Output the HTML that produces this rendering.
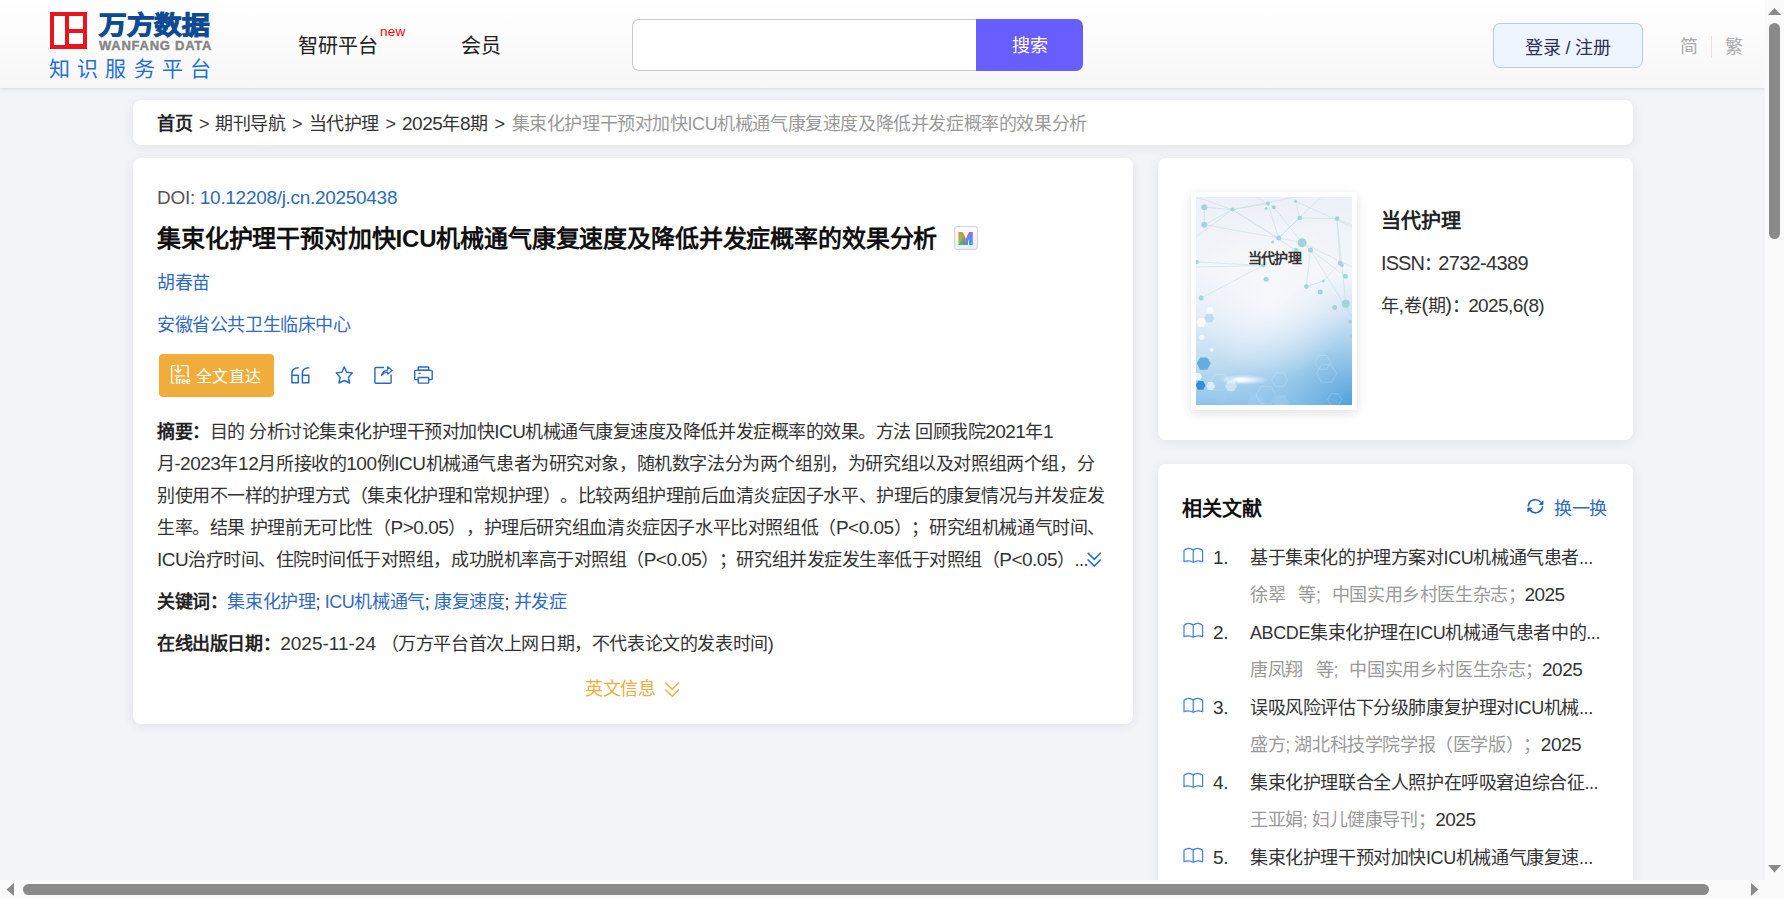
<!DOCTYPE html>
<html lang="zh-CN"><head><meta charset="utf-8">
<style>
*{margin:0;padding:0;box-sizing:border-box}
html,body{width:1784px;height:899px;overflow:hidden}
body{text-spacing-trim:space-all;font-family:"Liberation Sans",sans-serif;background:#f2f4f8;position:relative;color:#333}
.abs{position:absolute;white-space:nowrap}
.bc{top:111.5px;font-size:18px;letter-spacing:-0.4px;line-height:24px;color:#333}
.lt{font-size:20px}
.la{font-size:19px;letter-spacing:-0.5px}
.jl{font-size:18px;letter-spacing:-0.5px;line-height:32px;color:#333;text-align:justify;text-align-last:justify;white-space:nowrap}
#hdr{position:absolute;left:0;top:0;width:1765px;height:88px;background:linear-gradient(#ffffff,#f7f7f8);box-shadow:0 1px 4px rgba(0,0,0,0.12)}
.card{position:absolute;background:#fff;border-radius:8px;box-shadow:0 2px 12px rgba(20,30,60,0.08)}
.vsb{position:absolute;left:1765px;top:0;width:19px;height:899px;background:#fafafa}
.hsb{position:absolute;left:0;top:880px;width:1765px;height:19px;background:#fafafa}
</style></head><body>
<div id="hdr"></div>
<!-- logo -->
<div class="abs" style="left:50px;top:12px;width:37px;height:37px;background:#e8141e"></div>
<div class="abs" style="left:54px;top:16px;width:11px;height:29px;background:#fff"></div>
<div class="abs" style="left:69px;top:16px;width:14px;height:13px;background:#fff"></div>
<div class="abs" style="left:69px;top:33px;width:14px;height:11px;background:#fff"></div>
<div class="abs" style="left:99px;top:10.5px;font-size:28px;font-weight:bold;color:#0e4b93;letter-spacing:0px;line-height:34px;-webkit-text-stroke:1.2px #0e4b93;transform:scale(0.985,0.9);transform-origin:0 0">万方数据</div>
<div class="abs" style="left:99px;top:38.5px;font-size:13px;font-weight:bold;color:#858585;letter-spacing:0.75px;line-height:14px;-webkit-text-stroke:0.4px #858585">WANFANG DATA</div>
<div class="abs" style="left:49px;top:56px;font-size:21px;color:#1f6fd9;letter-spacing:7.2px;line-height:26px">知识服务平台</div>
<!-- nav -->
<div class="abs" style="left:298px;top:33px;font-size:20px;color:#222;line-height:26px">智研平台</div>
<div class="abs" style="left:380px;top:24px;font-size:13.5px;letter-spacing:0.3px;color:#f00;line-height:16px">new</div>
<div class="abs" style="left:461px;top:33px;font-size:20px;color:#222;line-height:26px">会员</div>
<!-- search -->
<div class="abs" style="left:632px;top:19px;width:351px;height:52px;border:1px solid #c9c9c9;border-radius:7px 0 0 7px;background:#fff;border-right:none"></div>
<div class="abs" style="left:976px;top:19px;width:107px;height:52px;border-radius:0 7px 7px 0;background:#685dfd;color:#fff;font-size:18px;letter-spacing:0px;line-height:55px;text-align:center">搜索</div>
<!-- login -->
<div class="abs" style="left:1493px;top:23px;width:150px;height:45px;border:1px solid #b5cbef;border-radius:7px;background:#eef5fe;color:#2b2e55;font-size:18px;letter-spacing:-0.2px;line-height:48px;text-align:center">登录 / 注册</div>
<div class="abs" style="left:1680px;top:35px;font-size:18px;letter-spacing:-0.4px;color:#aaa;line-height:24px">简</div>
<div class="abs" style="left:1711px;top:36px;width:1px;height:22px;background:#e3e3e3"></div>
<div class="abs" style="left:1725px;top:35px;font-size:18px;letter-spacing:-0.4px;color:#aaa;line-height:24px">繁</div>

<!-- breadcrumb -->
<div class="card" style="left:133px;top:100px;width:1500px;height:45px"></div>
<div class="abs bc" style="left:157px"><b style="color:#222">首页</b></div>
<div class="abs bc" style="left:199px">&gt;</div>
<div class="abs bc" style="left:215px">期刊导航</div>
<div class="abs bc" style="left:292px">&gt;</div>
<div class="abs bc" style="left:308.5px">当代护理</div>
<div class="abs bc" style="left:385.5px">&gt;</div>
<div class="abs bc" style="left:402px"><span class="la">2025</span>年<span class="la">8</span>期</div>
<div class="abs bc" style="left:494.5px">&gt;</div>
<div class="abs bc" style="left:511.5px"><span style="color:#999">集束化护理干预对加快ICU机械通气康复速度及降低并发症概率的效果分析</span></div>
<!-- main card -->
<div class="card" style="left:133px;top:158px;width:1000px;height:566px"></div>
<div class="abs" style="left:157px;top:186px;font-size:19px;letter-spacing:-0.3px;line-height:24px;color:#555">DOI: <span style="color:#2b6cb8">10.12208/j.cn.20250438</span></div>
<div class="abs" style="left:157px;top:224px;font-size:24px;letter-spacing:-0.15px;line-height:30px;color:#111;font-weight:bold">集束化护理干预对加快ICU机械通气康复速度及降低并发症概率的效果分析</div>
<div class="abs" style="left:954px;top:226px;width:24px;height:24px;border:1px solid #d2d2d2;border-radius:3px;background:linear-gradient(#fbfcfe,#e9eff8)"></div>
<svg class="abs" style="left:958px;top:231px" width="16" height="15"><defs>
<linearGradient id="mg" x1="0" y1="0" x2="1" y2="1"><stop offset="0" stop-color="#ff7a12"/><stop offset="0.45" stop-color="#8cc83a"/><stop offset="0.6" stop-color="#56a3a0"/><stop offset="1" stop-color="#3fa0ee"/></linearGradient>
<linearGradient id="mg2" x1="0" y1="0" x2="0" y2="1"><stop offset="0" stop-color="#b45ee0"/><stop offset="0.5" stop-color="#5d8ef0"/><stop offset="1" stop-color="#3ea2ee"/></linearGradient></defs>
<path d="M0.5 1 H4.5 L7.5 7 L7.5 14 H4.5 L4.5 7 V14 H0.5 Z" fill="url(#mg)"/>
<path d="M4.5 1 L8 8.5 V14 H4.8 Z" fill="#e0745a" opacity="0.9"/>
<path d="M7.5 14 V8.5 L11 1 H14.8 V14 H11 V8 L9 14 Z" fill="url(#mg2)"/>
<path d="M5 14 V8 L7.5 13 L10 8 V14 Z" fill="#4e9c8e"/>
</svg>
<div class="abs" style="left:157px;top:271px;font-size:18px;letter-spacing:-0.4px;line-height:24px;color:#2f6bc2">胡春苗</div>
<div class="abs" style="left:157px;top:312.5px;font-size:18px;letter-spacing:-0.4px;line-height:24px;color:#2f6bc2">安徽省公共卫生临床中心</div>
<div class="abs" style="left:159px;top:354px;width:115px;height:43px;border-radius:4px;background:#f0ad3b"></div>
<div class="abs" style="left:196px;top:365.5px;font-size:16px;letter-spacing:0.3px;line-height:22px;color:#fff">全文直达</div>
<svg class="abs" style="left:160px;top:355px" width="40" height="40" fill="none" stroke="#fff" stroke-width="1.4" stroke-linecap="round" stroke-linejoin="round">
<path d="M15 10.6 H12.5 Q11.6 10.6 11.6 11.5 V27.2 Q11.6 28.1 12.5 28.1 H14"/>
<path d="M21.2 10.6 H27.2 Q28.1 10.6 28.1 11.5 V21.8"/>
<path d="M18 10.3 V17.3"/><path d="M15 14.8 L18 17.6 L21 14.8"/><path d="M15.2 20.9 H24.4"/>
<text x="15.6" y="28.9" fill="#fff" stroke="none" font-family="Liberation Sans" font-weight="bold" font-size="8.2">free</text>
</svg>
<svg class="abs" style="left:285px;top:360px" width="150" height="30" fill="none" stroke="#2868c4" stroke-width="1.5" stroke-linejoin="round">
<path d="M13.8 7.8 C9 7.8 6.9 9.6 6.9 13.6 V22.8 H13.3 V15.3 H6.9"/>
<path d="M24.3 7.8 C19.5 7.8 17.4 9.6 17.4 13.6 V22.8 H23.8 V15.3 H17.4"/>
<path d="M59.3 6.9 L61.7 12.2 L67.3 12.9 L63.4 17.5 L64.7 23 L59.3 20.5 L53.9 23 L55.2 17.5 L51.3 12.9 L56.9 12.2 Z" stroke-width="1.4"/>
</svg>
<svg class="abs" style="left:365px;top:360px" width="80" height="30" fill="none" stroke="#2868c4" stroke-width="1.4" stroke-linejoin="round">
<path d="M19 7.5 H10.8 Q9.9 7.5 9.9 8.4 V22.3 Q9.9 23.2 10.8 23.2 H25.2 Q26.1 23.2 26.1 22.3 V14.6"/>
<path d="M16.4 15.6 Q17.6 10.6 22.7 10.2 V6.7 L27.2 10.4 L22.7 14.2 V12.2 Q19 12.2 16.4 15.6 Z" stroke-width="1.2"/>
<rect x="53.2" y="7" width="10.5" height="3.3" rx="0.6"/>
<path d="M53.2 19.6 H50.5 Q49.7 19.6 49.7 18.8 V11.2 Q49.7 10.4 50.5 10.4 H66.4 Q67.2 10.4 67.2 11.2 V18.8 Q67.2 19.6 66.4 19.6 H63.7"/>
<rect x="53.2" y="17.5" width="10.5" height="5.6" rx="0.6"/>
<path d="M53.4 13.3 H55.8" stroke-width="1.3"/>
</svg>
<!-- abstract -->
<div class="abs jl" style="left:157px;top:415.5px;width:896px"><b style="color:#222">摘要：</b>目的 分析讨论集束化护理干预对加快<span class="la">ICU</span>机械通气康复速度及降低并发症概率的效果。方法 回顾我院<span class="la">2021</span>年<span class="la">1</span></div>
<div class="abs jl" style="left:157px;top:447.5px;width:937px">月-<span class="la">2023</span>年<span class="la">12</span>月所接收的<span class="la">100</span>例<span class="la">ICU</span>机械通气患者为研究对象，随机数字法分为两个组别，为研究组以及对照组两个组，分</div>
<div class="abs jl" style="left:157px;top:479.5px;width:947px">别使用不一样的护理方式（集束化护理和常规护理）。比较两组护理前后血清炎症因子水平、护理后的康复情况与并发症发</div>
<div class="abs jl" style="left:157px;top:511.5px;width:948px">生率。结果 护理前无可比性（<span class="la">P&gt;0.05</span>），护理后研究组血清炎症因子水平比对照组低（<span class="la">P&lt;0.05</span>）；研究组机械通气时间、</div>
<div class="abs jl" style="left:157px;top:543.5px;width:931px"><span class="la">ICU</span>治疗时间、住院时间低于对照组，成功脱机率高于对照组（<span class="la">P&lt;0.05</span>）；研究组并发症发生率低于对照组（<span class="la">P&lt;0.05</span>）...</div>
<div class="abs" style="left:157px;top:590px;font-size:18px;letter-spacing:-0.4px;line-height:24px;color:#333"><b style="color:#222">关键词：</b><span style="color:#2f6bc2">集束化护理</span>; <span style="color:#2f6bc2">ICU机械通气</span>; <span style="color:#2f6bc2">康复速度</span>; <span style="color:#2f6bc2">并发症</span></div>
<div class="abs" style="left:157px;top:632px;font-size:18px;letter-spacing:-0.4px;line-height:24px;color:#333"><b style="color:#222">在线出版日期：</b><span style="font-size:19px;letter-spacing:0px">2025-11-24</span> （万方平台首次上网日期，不代表论文的发表时间)</div>
<div class="abs" style="left:585px;top:676.5px;font-size:18px;letter-spacing:-0.4px;line-height:24px;color:#f0ad3b">英文信息</div>
<svg class="abs" style="left:575px;top:670px" width="120" height="35" fill="none" stroke="#f0ad3b" stroke-width="1.4"><path d="M90.4 12.4 L97.2 19.3 L103.9 12.4 M90.4 19.4 L97.2 26.2 L103.9 19.4"/></svg>
<svg class="abs" style="left:1065px;top:545px" width="45" height="30" fill="none" stroke="#2868c8" stroke-width="1.6"><path d="M22.7 7.7 L29.3 14.3 L35.8 7.7 M22.7 14.5 L29.3 21.1 L35.8 14.5"/></svg>
<!-- journal card -->
<div class="card" style="left:1158px;top:158px;width:475px;height:282px"></div>
<div class="abs" style="left:1191px;top:192px;width:166px;height:218px;background:#fff;box-shadow:0 3px 10px rgba(0,0,0,0.12)"></div>
<svg class="abs" style="left:1196px;top:197px" width="156" height="208" viewBox="0 0 156 208">
<defs>
<linearGradient id="cg" x1="0" y1="0" x2="0" y2="1"><stop offset="0" stop-color="#edf1f7"/><stop offset="0.35" stop-color="#f3f5f9"/><stop offset="0.55" stop-color="#e6eef8"/><stop offset="0.8" stop-color="#c0dcf1"/><stop offset="1" stop-color="#8fc4ea"/></linearGradient>
<radialGradient id="cr" cx="156" cy="208" r="130" gradientUnits="userSpaceOnUse"><stop offset="0" stop-color="#4a9dda" stop-opacity="0.9"/><stop offset="0.5" stop-color="#79b8e6" stop-opacity="0.4"/><stop offset="1" stop-color="#9ccbef" stop-opacity="0"/></radialGradient>
<radialGradient id="cw" cx="75" cy="100" r="80" gradientUnits="userSpaceOnUse"><stop offset="0" stop-color="#f8f9fc" stop-opacity="0.85"/><stop offset="1" stop-color="#fafbfd" stop-opacity="0"/></radialGradient>
<radialGradient id="fl" cx="0.5" cy="0.5" r="0.5"><stop offset="0" stop-color="#ffffff" stop-opacity="1"/><stop offset="1" stop-color="#ffffff" stop-opacity="0"/></radialGradient>
</defs>
<rect width="156" height="208" fill="url(#cg)"/>
<rect width="156" height="208" fill="url(#cr)"/>
<rect width="156" height="208" fill="url(#cw)"/>
<g stroke="#b3dae1" stroke-width="0.6" opacity="0.75">
<line x1="8.2" y1="10.2" x2="36.4" y2="12.6"/><line x1="8.2" y1="10.2" x2="8.2" y2="27.7"/><line x1="36.4" y1="12.6" x2="8.2" y2="27.7"/><line x1="36.4" y1="12.6" x2="82.7" y2="40.9"/><line x1="36.4" y1="12.6" x2="71.9" y2="6.6"/><line x1="71.9" y1="6.6" x2="82.7" y2="40.9"/><line x1="77.9" y1="10.2" x2="106.1" y2="45.7"/><line x1="99.5" y1="4.2" x2="103.7" y2="21"/><line x1="103.7" y1="21" x2="82.7" y2="40.9"/><line x1="103.7" y1="21" x2="141" y2="21.6"/><line x1="82.7" y1="40.9" x2="106.1" y2="45.7"/><line x1="106.1" y1="45.7" x2="114.5" y2="52.9"/><line x1="114.5" y1="52.9" x2="110.3" y2="89.6"/><line x1="110.3" y1="89.6" x2="127.2" y2="84.1"/><line x1="127.2" y1="84.1" x2="144" y2="66.1"/><line x1="114.5" y1="52.9" x2="149.4" y2="79.3"/><line x1="141" y1="21.6" x2="144" y2="66.1"/><line x1="1" y1="64.9" x2="67.1" y2="68.5"/><line x1="67.1" y1="68.5" x2="5.2" y2="101"/><line x1="36.4" y1="12.6" x2="100.1" y2="53.5"/><line x1="8.2" y1="27.7" x2="82.7" y2="40.9"/><line x1="100.1" y1="53.5" x2="67.1" y2="68.5"/><line x1="141" y1="21.6" x2="149.8" y2="106.7"/><line x1="0" y1="0" x2="36.4" y2="12.6"/><line x1="36.4" y1="12.6" x2="99.5" y2="0"/><line x1="99.5" y1="4.2" x2="156" y2="30"/><line x1="125" y1="0" x2="82.7" y2="40.9"/><line x1="141" y1="21.6" x2="156" y2="28"/><line x1="0" y1="70" x2="67.1" y2="68.5"/><line x1="106.1" y1="45.7" x2="156" y2="70"/><line x1="114.5" y1="52.9" x2="156" y2="120"/><line x1="0" y1="40" x2="36.4" y2="12.6"/><line x1="60" y1="0" x2="77.9" y2="10.2"/>
</g>
<g fill="#a6d2da"><circle cx="8.2" cy="10.2" r="3"/><circle cx="36.4" cy="12.6" r="2"/><circle cx="71.9" cy="6.6" r="2"/><circle cx="77.9" cy="10.2" r="2"/><circle cx="70.1" cy="11.4" r="1.5"/><circle cx="99.5" cy="4.2" r="1.5"/><circle cx="103.7" cy="21" r="2.3"/><circle cx="141" cy="21.6" r="2.3"/><circle cx="8.2" cy="27.7" r="3"/><circle cx="82.7" cy="40.9" r="2.5"/><circle cx="76.7" cy="45.1" r="1.5"/><circle cx="106.1" cy="45.7" r="4.5"/><circle cx="114.5" cy="52.9" r="2.5"/><circle cx="100.1" cy="53.5" r="2.5"/><circle cx="1" cy="64.9" r="2"/><circle cx="67.1" cy="68.5" r="2"/><circle cx="144" cy="66.1" r="2.3"/><circle cx="145.8" cy="67.9" r="2"/><circle cx="149.4" cy="79.3" r="2.5"/><circle cx="70.1" cy="82.3" r="2.5"/><circle cx="110.3" cy="89.6" r="2.3"/><circle cx="127.2" cy="84.1" r="1.5"/><circle cx="124.2" cy="95" r="2.5"/><circle cx="5.2" cy="101" r="2.5"/><circle cx="149.8" cy="106.7" r="4"/><circle cx="138.6" cy="110.5" r="2.5"/><circle cx="154" cy="124.8" r="2"/><circle cx="154.8" cy="139" r="2"/></g>
<polygon points="10.2,125.4 7.7,129.7 2.7,129.7 0.2,125.4 2.7,121.1 7.7,121.1" fill="#ffffff" opacity="0.8"/><polygon points="18.0,113.6 16.0,117.1 12.0,117.1 10.0,113.6 12.0,110.1 16.0,110.1" fill="#ffffff" opacity="0.7"/><polygon points="18.3,121.0 15.8,125.3 10.8,125.3 8.3,121.0 10.8,116.7 15.8,116.7" fill="#b5d6f0" opacity="0.8"/><polygon points="8.8,140.4 7.3,143.0 4.3,143.0 2.8,140.4 4.3,137.8 7.3,137.8" fill="#ffffff" opacity="0.7"/><polygon points="17.8,152.8 16.8,154.5 14.8,154.5 13.8,152.8 14.8,151.1 16.8,151.1" fill="#ffffff" opacity="0.9"/><polygon points="14.7,166.6 11.2,172.7 4.2,172.7 0.7,166.6 4.2,160.5 11.2,160.5" fill="#59a8de" opacity="0.9"/><polygon points="6.1,179.6 4.1,183.1 0.1,183.1 -1.9,179.6 0.1,176.1 4.1,176.1" fill="#ffffff" opacity="0.7"/><polygon points="9.6,188.4 7.1,192.7 2.1,192.7 -0.4,188.4 2.1,184.1 7.1,184.1" fill="#2f88d4" opacity="0.95"/><polygon points="19.1,189.0 16.9,192.9 12.4,192.9 10.1,189.0 12.3,185.1 16.9,185.1" fill="#ffffff" opacity="0.6"/><polygon points="41.1,189.0 38.1,194.2 32.1,194.2 29.1,189.0 32.1,183.8 38.1,183.8" fill="#e6f2fb" opacity="0.6"/><polygon points="32.0,200.0 28.5,206.1 21.5,206.1 18.0,200.0 21.5,193.9 28.5,193.9" fill="#9ccbef" opacity="0.5"/><polygon points="69.0,205.0 64.5,212.8 55.5,212.8 51.0,205.0 55.5,197.2 64.5,197.2" fill="#a6d0f0" opacity="0.4"/><polygon points="93.0,205.0 89.0,211.9 81.0,211.9 77.0,205.0 81.0,198.1 89.0,198.1" fill="#b0d6f2" opacity="0.35"/><polygon points="32.3,185.2 27.8,193.0 18.8,193.0 14.3,185.2 18.8,177.4 27.8,177.4" fill="none" stroke="#ffffff" stroke-width="0.6" opacity="0.3"/><polygon points="91.7,182.8 87.7,189.7 79.7,189.7 75.7,182.8 79.7,175.9 87.7,175.9" fill="none" stroke="#ffffff" stroke-width="0.6" opacity="0.3"/><polygon points="134.7,165.3 130.7,172.2 122.7,172.2 118.7,165.3 122.7,158.4 130.7,158.4" fill="none" stroke="#ffffff" stroke-width="0.6" opacity="0.3"/><polygon points="140.5,176.5 135.5,185.2 125.5,185.2 120.5,176.5 125.5,167.8 135.5,167.8" fill="none" stroke="#ffffff" stroke-width="0.6" opacity="0.3"/><polygon points="145.6,202.7 142.1,208.8 135.1,208.8 131.6,202.7 135.1,196.6 142.1,196.6" fill="none" stroke="#ffffff" stroke-width="0.6" opacity="0.3"/><polygon points="80.0,198.0 75.0,206.7 65.0,206.7 60.0,198.0 65.0,189.3 75.0,189.3" fill="none" stroke="#ffffff" stroke-width="0.6" opacity="0.3"/>
<ellipse cx="47.6" cy="182.8" rx="26" ry="5" fill="url(#fl)"/><ellipse cx="45" cy="182.8" rx="9" ry="3.5" fill="url(#fl)"/>
</svg>
<div class="abs" style="left:1248px;top:248px;font-size:14px;letter-spacing:-0.8px;font-weight:bold;line-height:20px;color:#333">当代护理</div>
<div class="abs" style="left:1381px;top:207.5px;font-size:20px;font-weight:bold;line-height:26px;color:#222">当代护理</div>
<div class="abs" style="left:1381px;top:251px;font-size:18px;letter-spacing:-0.4px;line-height:24px;color:#333"><span class="lt" style="letter-spacing:-0.9px">ISSN</span>：<span class="lt" style="letter-spacing:-0.65px;margin-left:-3.5px">2732-4389</span></div>
<div class="abs" style="left:1381px;top:293px;font-size:18px;letter-spacing:-0.4px;line-height:24px;color:#333">年<span class="lt">,</span>卷<span class="lt">(</span>期<span class="lt">)</span>：<span class="lt" style="font-size:19px;letter-spacing:-0.6px;margin-left:-1px">2025,6(8)</span></div>
<!-- related card -->
<div class="card" style="left:1158px;top:464px;width:475px;height:460px"></div>
<div class="abs" style="left:1182px;top:496px;font-size:20px;font-weight:bold;line-height:26px;color:#111">相关文献</div>
<div class="abs" style="left:1554px;top:496.5px;font-size:18px;letter-spacing:-0.4px;line-height:24px;color:#2f6bc2">换一换</div>

<div class="abs" style="left:1213px;top:546px;font-size:18px;letter-spacing:-0.4px;line-height:24px;color:#333"><span style="font-size:19px;letter-spacing:-0.2px">1.</span></div>
<div class="abs" style="left:1250px;top:546px;font-size:18px;letter-spacing:-0.4px;line-height:24px;color:#333">基于集束化的护理方案对ICU机械通气患者...</div>
<div class="abs" style="left:1250px;top:582.5px;font-size:18px;letter-spacing:-0.4px;line-height:24px;color:#999">徐翠 &nbsp;<span style="margin-left:4px">等;</span> &nbsp;<span style="margin-left:2px">中国实用乡村医生杂志；</span><span style="color:#333;font-size:19px;letter-spacing:-0.5px;margin-left:-1px">2025</span></div>
<div class="abs" style="left:1213px;top:621px;font-size:18px;letter-spacing:-0.4px;line-height:24px;color:#333"><span style="font-size:19px;letter-spacing:-0.2px">2.</span></div>
<div class="abs" style="left:1250px;top:621px;font-size:18px;letter-spacing:-0.4px;line-height:24px;color:#333">ABCDE集束化护理在ICU机械通气患者中的...</div>
<div class="abs" style="left:1250px;top:657.5px;font-size:18px;letter-spacing:-0.4px;line-height:24px;color:#999">唐凤翔 &nbsp;<span style="margin-left:4px">等;</span> &nbsp;<span style="margin-left:2px">中国实用乡村医生杂志；</span><span style="color:#333;font-size:19px;letter-spacing:-0.5px;margin-left:-1px">2025</span></div>
<div class="abs" style="left:1213px;top:696px;font-size:18px;letter-spacing:-0.4px;line-height:24px;color:#333"><span style="font-size:19px;letter-spacing:-0.2px">3.</span></div>
<div class="abs" style="left:1250px;top:696px;font-size:18px;letter-spacing:-0.4px;line-height:24px;color:#333">误吸风险评估下分级肺康复护理对ICU机械...</div>
<div class="abs" style="left:1250px;top:732.5px;font-size:18px;letter-spacing:-0.4px;line-height:24px;color:#999">盛方; 湖北科技学院学报（医学版）；<span style="color:#333;font-size:19px;letter-spacing:-0.5px">2025</span></div>
<div class="abs" style="left:1213px;top:771px;font-size:18px;letter-spacing:-0.4px;line-height:24px;color:#333"><span style="font-size:19px;letter-spacing:-0.2px">4.</span></div>
<div class="abs" style="left:1250px;top:771px;font-size:18px;letter-spacing:-0.4px;line-height:24px;color:#333">集束化护理联合全人照护在呼吸窘迫综合征...</div>
<div class="abs" style="left:1250px;top:807.5px;font-size:18px;letter-spacing:-0.4px;line-height:24px;color:#999">王亚娟; 妇儿健康导刊；<span style="color:#333;font-size:19px;letter-spacing:-0.5px">2025</span></div>
<div class="abs" style="left:1213px;top:846px;font-size:18px;letter-spacing:-0.4px;line-height:24px;color:#333"><span style="font-size:19px;letter-spacing:-0.2px">5.</span></div>
<div class="abs" style="left:1250px;top:846px;font-size:18px;letter-spacing:-0.4px;line-height:24px;color:#333">集束化护理干预对加快ICU机械通气康复速...</div>
<svg class="abs" style="left:1175px;top:540px" width="30" height="30" fill="none" stroke="#3c7fe6" stroke-width="1.2" stroke-linejoin="round"><path d="M9 21.8 V10.2 Q13.5 6.5 18.2 10 Q22.8 6.5 27.6 10.2 V21.8 Q22.8 19.6 18.2 22.3 Q13.5 19.6 9 21.8 Z M18.2 10 V22.3"/></svg>
<svg class="abs" style="left:1175px;top:615px" width="30" height="30" fill="none" stroke="#3c7fe6" stroke-width="1.2" stroke-linejoin="round"><path d="M9 21.8 V10.2 Q13.5 6.5 18.2 10 Q22.8 6.5 27.6 10.2 V21.8 Q22.8 19.6 18.2 22.3 Q13.5 19.6 9 21.8 Z M18.2 10 V22.3"/></svg>
<svg class="abs" style="left:1175px;top:690px" width="30" height="30" fill="none" stroke="#3c7fe6" stroke-width="1.2" stroke-linejoin="round"><path d="M9 21.8 V10.2 Q13.5 6.5 18.2 10 Q22.8 6.5 27.6 10.2 V21.8 Q22.8 19.6 18.2 22.3 Q13.5 19.6 9 21.8 Z M18.2 10 V22.3"/></svg>
<svg class="abs" style="left:1175px;top:765px" width="30" height="30" fill="none" stroke="#3c7fe6" stroke-width="1.2" stroke-linejoin="round"><path d="M9 21.8 V10.2 Q13.5 6.5 18.2 10 Q22.8 6.5 27.6 10.2 V21.8 Q22.8 19.6 18.2 22.3 Q13.5 19.6 9 21.8 Z M18.2 10 V22.3"/></svg>
<svg class="abs" style="left:1175px;top:840px" width="30" height="30" fill="none" stroke="#3c7fe6" stroke-width="1.2" stroke-linejoin="round"><path d="M9 21.8 V10.2 Q13.5 6.5 18.2 10 Q22.8 6.5 27.6 10.2 V21.8 Q22.8 19.6 18.2 22.3 Q13.5 19.6 9 21.8 Z M18.2 10 V22.3"/></svg>
<svg class="abs" style="left:1520px;top:490px" width="40" height="30" fill="none" stroke="#1f5fbf" stroke-width="1.5"><path d="M8.3 16.5 A7 7 0 0 1 20.8 12.4"/><path d="M22.6 16.2 A7 7 0 0 1 10 19.8"/><path d="M23 10.8 L23 14.6 L19.2 14.6 Z M7.8 21.8 L7.8 18 L11.6 18 Z" fill="#1f5fbf" stroke-width="0.8"/></svg>
<div class="vsb"></div>
<div class="abs" style="left:1769px;top:23px;width:11px;height:216px;border-radius:6px;background:#8a8a8a"></div>
<svg class="abs" style="left:1765px;top:0px" width="19" height="20"><path d="M3 15 L9.5 8 L16 15 Z" fill="#8a8a8a"/></svg>
<svg class="abs" style="left:1765px;top:860px" width="19" height="20"><path d="M3 5 L16 5 L9.5 12.5 Z" fill="#8a8a8a"/></svg>
<div class="hsb"></div>
<div class="abs" style="left:23px;top:884px;width:1686px;height:11px;border-radius:6px;background:#8a8a8a"></div>
<svg class="abs" style="left:0px;top:880px" width="20" height="19"><path d="M14 3 L14 16 L6.5 9.5 Z" fill="#8a8a8a"/></svg>
<svg class="abs" style="left:1745px;top:880px" width="20" height="19"><path d="M6 3 L6 16 L13.5 9.5 Z" fill="#8a8a8a"/></svg>
</body></html>
